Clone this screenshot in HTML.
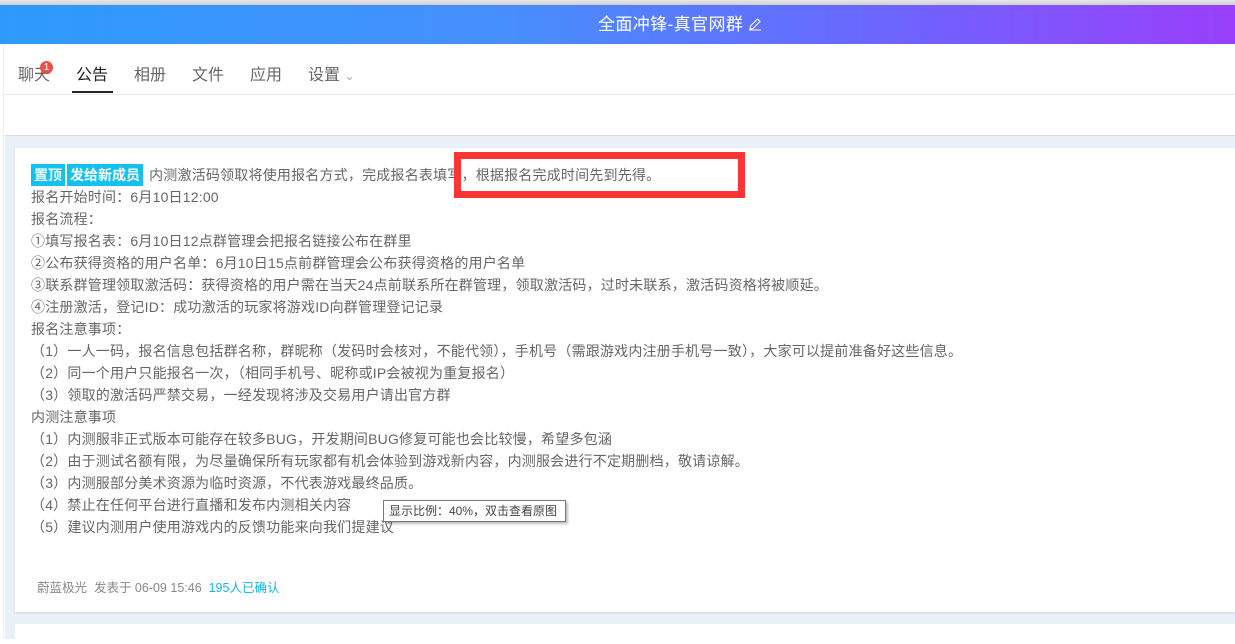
<!DOCTYPE html>
<html><head><meta charset="utf-8"><style>
*{margin:0;padding:0;box-sizing:border-box}
body{width:1235px;height:639px;overflow:hidden;background:#fff;font-family:"Liberation Sans","Microsoft YaHei","Noto Sans CJK SC",sans-serif;position:relative}
.top{position:absolute;left:0;top:0;width:1235px;height:5px;background:linear-gradient(#e8e8e8,#cfcfcf)}
.hdr{position:absolute;left:0;top:5px;width:1235px;height:39px;background:linear-gradient(90deg,#2e9bfc 0%,#4690fd 40%,#6a67fe 70%,#9a3ffb 100%)}
.ttl{position:absolute;left:598px;top:5px;color:#fff;font-size:17px;line-height:39px;white-space:nowrap;letter-spacing:0.4px}
.tabs{position:absolute;left:4px;top:44px;width:1231px;height:51px;border-bottom:1px solid #e8e8e8;background:#fff}
.tab{position:absolute;font-size:16px;color:#666}
.act{color:#222}
.uline{position:absolute;left:72px;top:91px;width:41px;height:2px;background:#222}
.badge{position:absolute;left:40px;top:61px;width:13px;height:13px;border-radius:50%;background:#e8514a;color:#fff;font-size:10px;line-height:13px;text-align:center}
.side{position:absolute;left:0;top:44px;width:4px;height:595px;background:#fff;border-right:1px solid #eee}
.bg{position:absolute;left:5px;top:135px;width:1230px;height:504px;background:#e9f0f8;border-top:1px solid #d8dde3}
.card{position:absolute;left:15px;top:148px;width:1220px;height:464px;background:#fff;box-shadow:0 1px 3px rgba(0,0,0,.1)}
.card2{position:absolute;left:15px;top:624px;width:1220px;height:20px;background:#fff}
.txt{position:absolute;left:31px;top:164px;font-size:14px;letter-spacing:0.2px;color:#666;line-height:22px;white-space:nowrap}
.tag{display:inline-block;background:#12c1ef;color:#fff;font-weight:bold;font-size:14px;letter-spacing:0;line-height:22px;padding:0 3px;margin-right:2px;vertical-align:top}
.red{position:absolute;left:454px;top:152px;width:291px;height:46px;border:7px solid #fb3434}
.foot{position:absolute;left:37px;top:577px;font-size:12.5px;color:#888}
.foot b{font-weight:normal;color:#13b8e8}
.tip{position:absolute;left:383px;top:500px;width:183px;height:22px;border:1px solid #777;background:#fff;font-size:12px;color:#444;line-height:20px;padding-left:5px;box-shadow:2px 2px 2px rgba(0,0,0,.25)}
</style></head><body>
<div class="top"></div>
<div class="hdr"></div>
<div class="ttl">全面冲锋-真官网群 <svg width="14" height="14" viewBox="0 0 14 14" style="vertical-align:-1px"><path d="M2 12 L2.5 9 L9.5 2 L12 4.5 L5 11.5 Z M1 13 H13" fill="none" stroke="#fff" stroke-width="1"/></svg></div>
<div class="side"></div>
<div class="tabs"></div>
<div class="tab" style="left:18px;top:61px">聊天</div>
<div class="badge">1</div>
<div class="tab act" style="left:76px;top:61px">公告</div>
<div class="uline"></div>
<div class="tab" style="left:134px;top:61px">相册</div>
<div class="tab" style="left:192px;top:61px">文件</div>
<div class="tab" style="left:250px;top:61px">应用</div>
<div class="tab" style="left:308px;top:61px">设置 <span style="font-size:12px;color:#aaa">&#8964;</span></div>
<div class="bg"></div>
<div class="card"></div>
<div class="card2"></div>
<div class="txt">
<span class="tag">置顶</span><span class="tag">发给新成员</span> 内测激活码领取将使用报名方式，完成报名表填写，根据报名完成时间先到先得。<br>
报名开始时间：6月10日12:00<br>
报名流程：<br>
①填写报名表：6月10日12点群管理会把报名链接公布在群里<br>
②公布获得资格的用户名单：6月10日15点前群管理会公布获得资格的用户名单<br>
③联系群管理领取激活码：获得资格的用户需在当天24点前联系所在群管理，领取激活码，过时未联系，激活码资格将被顺延。<br>
④注册激活，登记ID：成功激活的玩家将游戏ID向群管理登记记录<br>
报名注意事项：<br>
（1）一人一码，报名信息包括群名称，群昵称（发码时会核对，不能代领），手机号（需跟游戏内注册手机号一致），大家可以提前准备好这些信息。<br>
（2）同一个用户只能报名一次，（相同手机号、昵称或IP会被视为重复报名）<br>
（3）领取的激活码严禁交易，一经发现将涉及交易用户请出官方群<br>
内测注意事项<br>
（1）内测服非正式版本可能存在较多BUG，开发期间BUG修复可能也会比较慢，希望多包涵<br>
（2）由于测试名额有限，为尽量确保所有玩家都有机会体验到游戏新内容，内测服会进行不定期删档，敬请谅解。<br>
（3）内测服部分美术资源为临时资源，不代表游戏最终品质。<br>
（4）禁止在任何平台进行直播和发布内测相关内容<br>
（5）建议内测用户使用游戏内的反馈功能来向我们提建议
</div>
<div class="red"></div>
<div class="foot">蔚蓝极光&nbsp; 发表于 06-09 15:46&nbsp; <b>195人已确认</b></div>
<div class="tip">显示比例：40%，双击查看原图</div>
</body></html>
